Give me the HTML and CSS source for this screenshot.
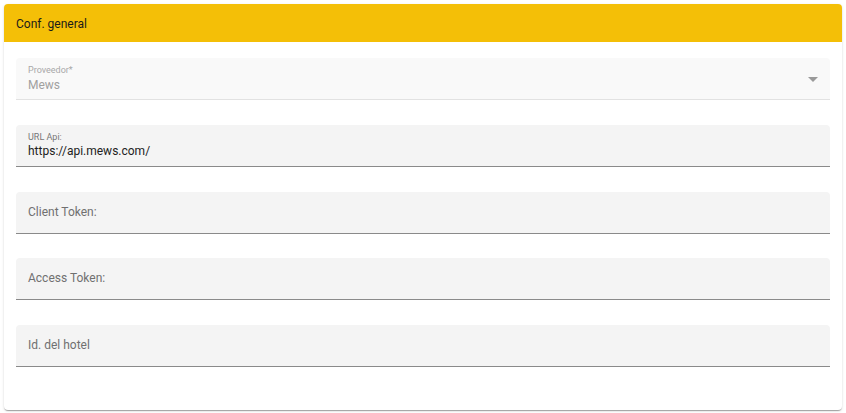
FILE: index.html
```html
<!DOCTYPE html>
<html lang="es">
<head>
<meta charset="utf-8">
<link rel="stylesheet" href="styles.css">
</head>
<body>
<div class="card">
  <div class="card-header">Conf. general</div>
  <div class="card-body">
    <div class="field field-disabled">
      <div class="field-inner">
        <span class="label-float">Proveedor*</span>
        <span class="value value-disabled">Mews</span>
      </div>
      <svg class="arrow" width="10" height="5" viewBox="0 0 10 5"><path d="M0 0 L10 0 L5 5 Z" fill="#9a9a9a"/></svg>
    </div>
    <div class="field">
      <div class="field-inner">
        <span class="label-float">URL Api:</span>
        <span class="value">https://api.mews.com/</span>
      </div>
    </div>
    <div class="field">
      <div class="field-inner center">
        <span class="placeholder">Client Token:</span>
      </div>
    </div>
    <div class="field">
      <div class="field-inner center">
        <span class="placeholder">Access Token:</span>
      </div>
    </div>
    <div class="field">
      <div class="field-inner center">
        <span class="placeholder">Id. del hotel</span>
      </div>
    </div>
  </div>
</div>
</body>
</html>
```

FILE: styles.css
```css
html, body {
  margin: 0;
  padding: 0;
  background: #ffffff;
}
body {
  padding: 4px;
  font-family: Roboto, "Liberation Sans", Arial, sans-serif;
}
.card {
  width: 838px;
  height: 406px;
  box-sizing: border-box;
  background: #fff;
  border-radius: 4px;
  box-shadow: 0 2px 1px -1px rgba(0,0,0,0.2), 0 1px 1px 0 rgba(0,0,0,0.14), 0 1px 3px 0 rgba(0,0,0,0.12);
  overflow: hidden;
}
.card-header {
  height: 38px;
  background: #f4bf07;
  color: #1a1a1a;
  font-size: 12px;
  display: flex;
  align-items: center;
  padding-left: 12px;
  padding-top: 1px;
  box-sizing: border-box;
}
.card-body {
  padding: 16px 12px 0 12px;
  display: flex;
  flex-direction: column;
  gap: 24.75px;
}
.field {
  height: 42px;
  box-sizing: border-box;
  background: #f4f4f4;
  border-bottom: 1px solid #8a8a8a;
  border-radius: 4px 4px 0 0;
  display: flex;
  align-items: center;
  padding: 0 12px;
}
.field-disabled {
  background: #f9f9f9;
  border-bottom: 1px solid #e2e2e2;
}
.field-inner {
  flex: 1;
  display: flex;
  flex-direction: column;
  justify-content: flex-start;
  height: 100%;
  padding-top: 6px;
  box-sizing: border-box;
}
.field-inner.center {
  justify-content: center;
  padding-top: 0;
  padding-bottom: 1px;
}
.label-float {
  font-size: 9px;
  color: #777;
  line-height: 12px;
}
.field-disabled .label-float {
  color: #a8a8a8;
}
.value {
  font-size: 12px;
  color: #222;
  line-height: 17px;
}
.value-disabled {
  color: #a0a0a0;
  line-height: 19px;
}
.placeholder {
  font-size: 12px;
  color: #707070;
}
.arrow {
  margin-right: 0;
  margin-top: 2px;
}
```
